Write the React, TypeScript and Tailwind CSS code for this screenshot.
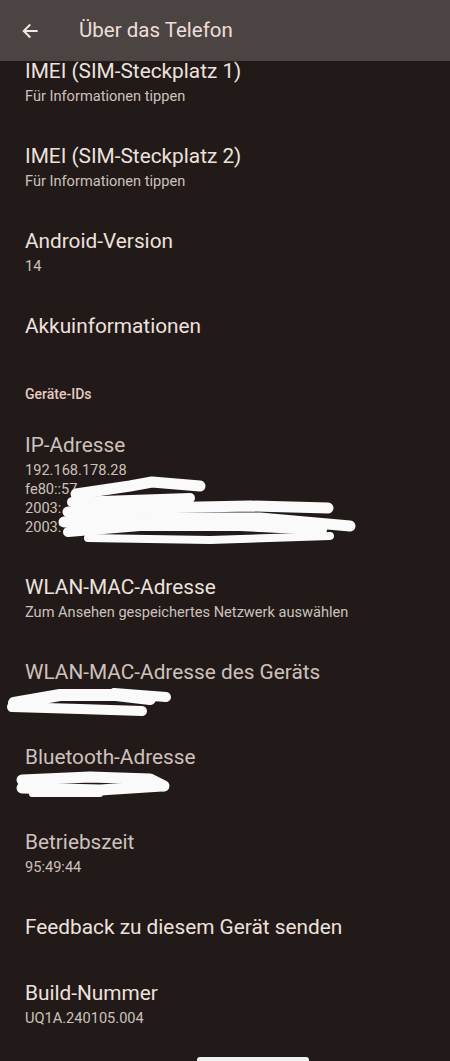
import React from 'react';

// Über das Telefon – Android settings screen (dark)

type Row = {
  title: string;
  lines?: string[];
  dim?: boolean;
  redact?: 'ip' | 'mac' | 'bt';
};

const rowsTop: Row[] = [
  { title: 'IMEI (SIM-Steckplatz 1)', lines: ['Für Informationen tippen'] },
  { title: 'IMEI (SIM-Steckplatz 2)', lines: ['Für Informationen tippen'] },
  { title: 'Android-Version', lines: ['14'] },
  { title: 'Akkuinformationen' },
];

const rowsIds: Row[] = [
  {
    title: 'IP-Adresse',
    dim: true,
    lines: ['192.168.178.28', 'fe80::57', '2003:', '2003:'],
    redact: 'ip',
  },
  { title: 'WLAN-MAC-Adresse', lines: ['Zum Ansehen gespeichertes Netzwerk auswählen'] },
  { title: 'WLAN-MAC-Adresse des Geräts', dim: true, lines: [' '], redact: 'mac' },
  { title: 'Bluetooth-Adresse', dim: true, lines: [' '], redact: 'bt' },
  { title: 'Betriebszeit', dim: true, lines: ['95:49:44'] },
  { title: 'Feedback zu diesem Gerät senden' },
  { title: 'Build-Nummer', lines: ['UQ1A.240105.004'] },
];

// hand-drawn white redaction strokes, laid over the row
function Scribble({ kind }: { kind: 'ip' | 'mac' | 'bt' }) {
  if (kind === 'ip') {
    return (
      <svg className="absolute left-0 top-[58px] pointer-events-none" width="380" height="90" viewBox="0 0 380 90">
        <g fill="none" stroke="#fafafa" strokeLinecap="round" strokeLinejoin="round">
          <path d="M76 24 L130 16 L152 12 L200 16" strokeWidth="11" />
          <path d="M72 32 L190 28" strokeWidth="10" />
          <path d="M68 42 L150 38 L250 36 L328 38" strokeWidth="11" />
          <path d="M64 52 L160 48 L260 48 L350 56" strokeWidth="11" />
          <path d="M68 62 L140 56 L240 56 L322 60" strokeWidth="10" />
          <path d="M88 68 L210 70 L330 66" strokeWidth="8" />
        </g>
      </svg>
    );
  }
  if (kind === 'mac') {
    return (
      <svg className="absolute left-0 top-[40px] pointer-events-none" width="180" height="40" viewBox="0 0 180 40">
        <g fill="none" stroke="#fafafa" strokeLinecap="round" strokeLinejoin="round">
          <path d="M114 14 L166 18" strokeWidth="10" />
          <path d="M14 24 L60 16 L116 16 L150 20" strokeWidth="12" />
          <path d="M12 28 L80 30 L142 32" strokeWidth="10" />
        </g>
      </svg>
    );
  }
  return (
    <svg className="absolute left-0 top-[42px] pointer-events-none" width="180" height="36" viewBox="0 0 180 36">
      <g fill="none" stroke="#fafafa" strokeLinecap="round" strokeLinejoin="round">
        <path d="M22 14 L90 11 L150 13 L164 20" strokeWidth="11" />
        <path d="M22 22 L100 24 L162 20" strokeWidth="11" />
        <path d="M32 28 L100 28" strokeWidth="6" />
      </g>
    </svg>
  );
}

function SettingRow({ row }: { row: Row }) {
  return (
    <div className="relative px-[25px] pt-[17px] pb-[17px]">
      <div
        className={`text-[20.8px] leading-[32px] ${row.dim ? 'text-[#cfc1bc]' : 'text-[#eee1dd]'}`}
      >
        {row.title}
      </div>
      {row.lines?.map((l, i) => (
        <div key={i} className="text-[14.6px] leading-[19px] text-[#cdc1bd] whitespace-pre">
          {l}
        </div>
      ))}
      {row.redact && <Scribble kind={row.redact} />}
    </div>
  );
}

export default function App() {
  return (
    <div
      className="relative w-[450px] h-[1061px] overflow-hidden bg-[#211a18]"
      style={{ fontFamily: 'Roboto, "Noto Sans", sans-serif' }}
    >
      {/* Top app bar overlays the scrolled list */}
      <header className="absolute inset-x-0 top-0 z-10 h-[61px] bg-[#4c4442] flex items-center">
        <svg className="ml-[20px]" width="20" height="20" viewBox="0 0 24 24" fill="none">
          <path d="M20 12H5M11.5 5L4.5 12l7 7" stroke="#f3e8e5" strokeWidth="2.4" strokeLinecap="square" />
        </svg>
        <h1 className="ml-[39px] text-[20.5px] text-[#ecdfdb]">Über das Telefon</h1>
      </header>

      <main className="pt-[38px]">
        {rowsTop.map((r) => (
          <SettingRow key={r.title} row={r} />
        ))}

        <div className="px-[25px] pt-[25px] pb-[8px] text-[14px] leading-[20px] font-medium text-[#e8cbc0]">
          Geräte-IDs
        </div>

        {rowsIds.map((r) => (
          <SettingRow key={r.title} row={r} />
        ))}
      </main>

      {/* gesture bar */}
      <div className="absolute bottom-0 left-[197px] w-[112px] h-[4px] rounded-t-[3px] bg-[#f1f1f1]" />
    </div>
  );
}
